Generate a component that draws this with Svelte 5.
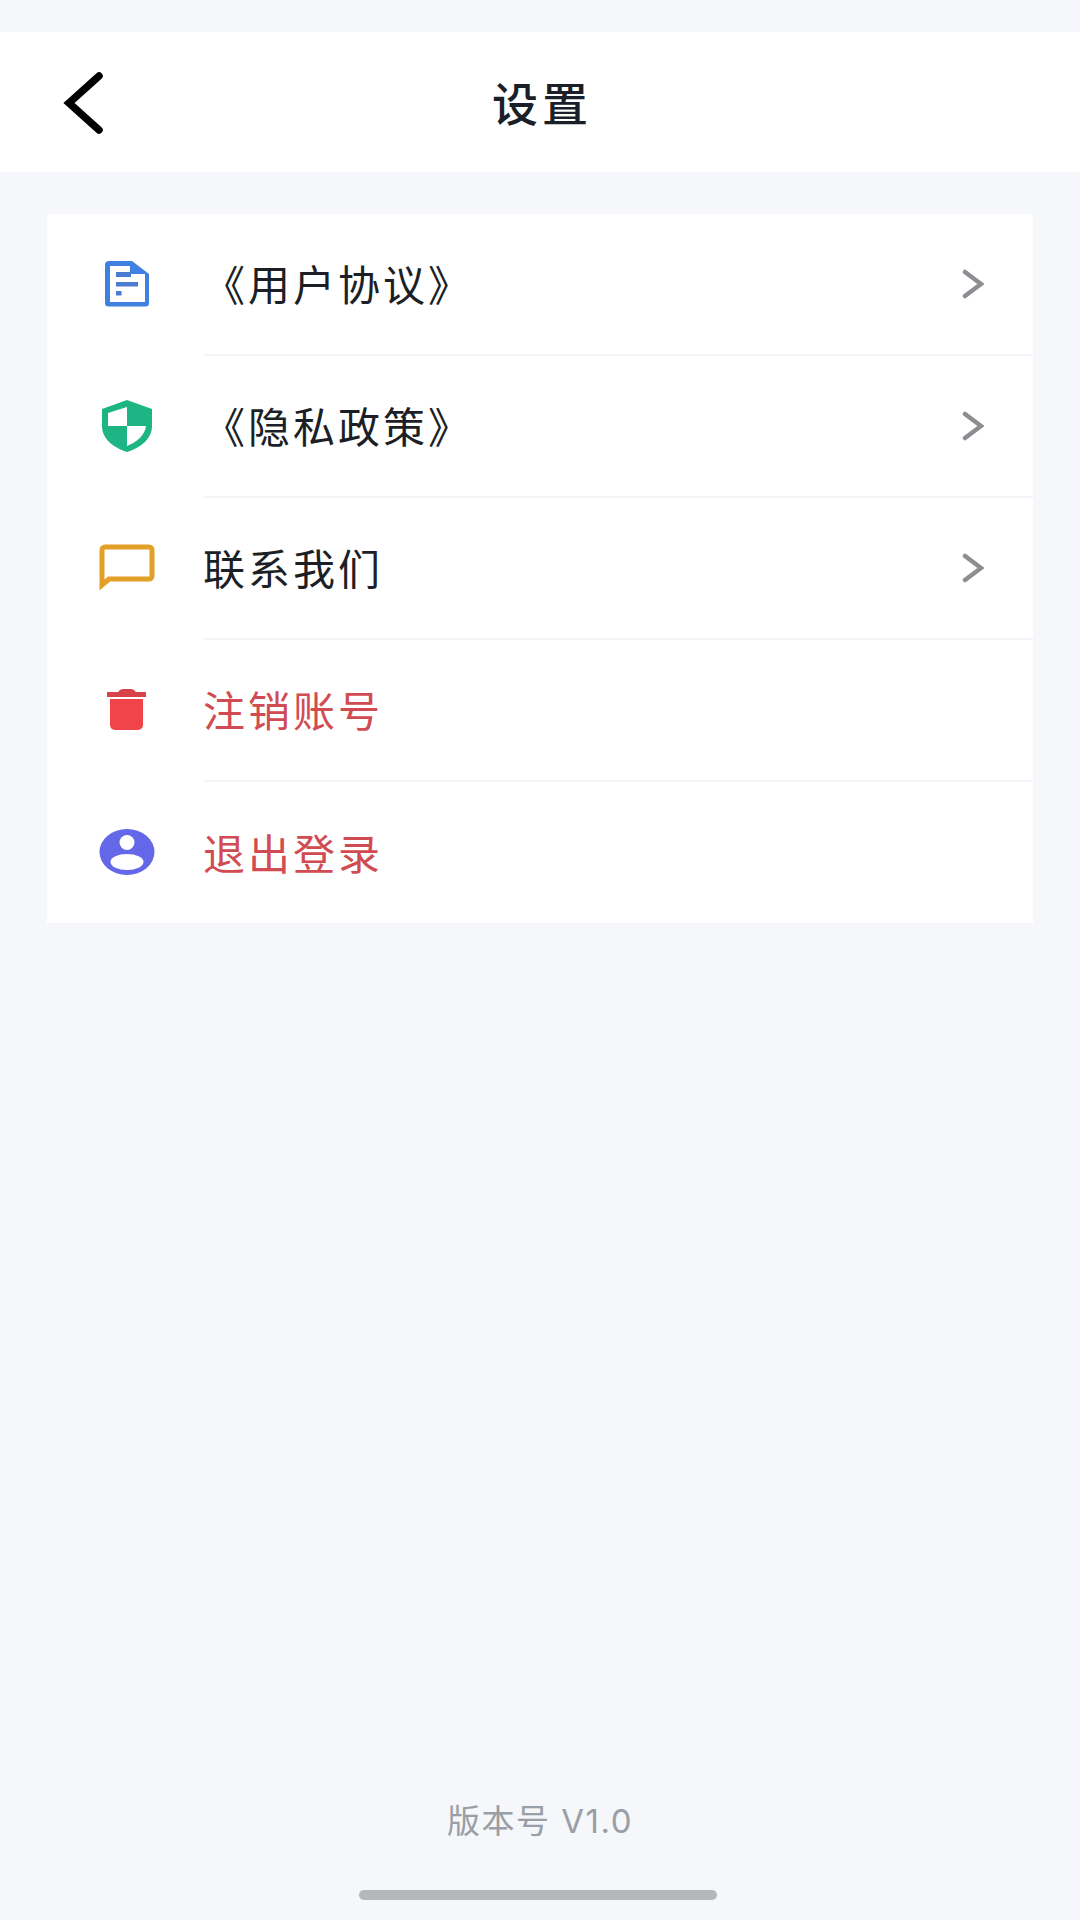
<script>
  const rows = [
    { icon: 'doc', label: '《用户协议》', arrow: true },
    { icon: 'shield', label: '《隐私政策》', arrow: true },
    { icon: 'chat', label: '联系我们', arrow: true },
    { icon: 'trash', label: '注销账号', danger: true },
    { icon: 'user', label: '退出登录', danger: true }
  ];
</script>

<div class="page">
  <header class="bar">
    <svg class="back" width="44" height="64" viewBox="0 0 44 64" fill="none">
      <path d="M38 6 L8 33 L38 60" stroke="#000" stroke-width="7.5" stroke-linecap="round" stroke-linejoin="miter" />
    </svg>
    <h1>设置</h1>
  </header>

  <section class="card">
    {#each rows as row}
      <div class="row">
        <span class="icon">
          {#if row.icon === 'doc'}
            <svg width="44" height="46" viewBox="0 0 44 46">
              <path d="M4 0 H27 L44 13 V42 a3.5 3.5 0 0 1 -3.5 3.5 H3.5 a3.5 3.5 0 0 1 -3.5 -3.5 V4 a4 4 0 0 1 4 -4 Z" fill="#4080e0" />
              <path d="M5 5 H25 V13 H40 V41 H5 Z" fill="#fff" />
              <rect x="11" y="11" width="15" height="5" fill="#4a7cd2" />
              <rect x="11" y="21" width="22" height="4.5" fill="#4a7cd2" />
              <rect x="11" y="30" width="5.5" height="4.5" fill="#4a7cd2" />
            </svg>
          {:else if row.icon === 'shield'}
            <svg width="50" height="52" viewBox="0 0 50 52">
              <path d="M25 0 L50 9 V26 C50 39 38 48 25 52 C12 48 0 39 0 26 V9 Z" fill="#1eb584" />
              <path d="M25 7 V26 H6 V13 Z" fill="#fff" />
              <path d="M25 26 H44 C43 35 35 42 25 46 Z" fill="#fff" />
            </svg>
          {:else if row.icon === 'chat'}
            <svg width="56" height="48" viewBox="0 0 56 48" fill="none">
              <path d="M3 41 V6 a3 3 0 0 1 3 -3 H50 a3 3 0 0 1 3 3 V32 a3 3 0 0 1 -3 3 H10 Z" stroke="#e3a029" stroke-width="5" />
            </svg>
          {:else if row.icon === 'trash'}
            <svg width="40" height="42" viewBox="0 0 40 42">
              <path d="M0 3 H11 Q13 0 16 0 H24 Q27 0 29 3 H39 V8 H0 Z" fill="#d8434a" />
              <path d="M3 10 H36 V36 a5 5 0 0 1 -5 5 H8 a5 5 0 0 1 -5 -5 Z" fill="#f0434a" />
            </svg>
          {:else}
            <svg width="56" height="46" viewBox="0 0 56 46">
              <ellipse cx="28" cy="23" rx="27.5" ry="23" fill="#6467e8" />
              <circle cx="28" cy="13.5" r="7.5" fill="#fff" />
              <ellipse cx="28" cy="33" rx="16.5" ry="8" fill="#fff" />
            </svg>
          {/if}
        </span>
        <span class="main">
          <span class="label" class:danger={row.danger}>{row.label}</span>
          {#if row.arrow}
            <svg class="chev" width="22" height="30" viewBox="0 0 22 30" fill="none">
              <path d="M3 3 L19 15 L3 27" stroke="#8c8e92" stroke-width="4.5" stroke-linecap="round" />
            </svg>
          {/if}
        </span>
      </div>
    {/each}
  </section>

  <footer class="foot">
    <div class="version">版本号 V1.0</div>
    <div class="home"></div>
  </footer>
</div>

<style>
  :global(body) {
    margin: 0;
    background: #f5f7fa;
  }
  .page {
    height: 1920px;
    display: flex;
    flex-direction: column;
    background: #f5f7fa;
    font-family: "Noto Sans CJK SC", "Noto Sans", sans-serif;
    padding-top: 32px;
    box-sizing: border-box;
  }
  .bar {
    height: 140px;
    background: #fff;
    display: flex;
    align-items: center;
    justify-content: center;
    position: relative;
  }
  .back {
    position: absolute;
    left: 61px;
    top: 38px;
  }
  h1 {
    margin: 0 0 3px 4px;
    font-size: 46px;
    font-weight: 500;
    letter-spacing: 4px;
    color: #1b1f2a;
    line-height: 1;
  }
  .card {
    margin: 42px 47px 0;
    background: #fff;
    display: flex;
    flex-direction: column;
  }
  .row {
    height: 142px;
    display: flex;
  }
  .row:last-child {
    height: 141px;
  }
  .icon {
    width: 157px;
    flex: none;
    display: flex;
    align-items: center;
    justify-content: center;
    padding-left: 3px;
    padding-bottom: 2px;
    box-sizing: border-box;
  }
  .main {
    flex: 1;
    display: flex;
    align-items: center;
    justify-content: space-between;
    padding-right: 49px;
    border-bottom: 2px solid #f3f4f7;
    box-sizing: border-box;
  }
  .row:last-child .main {
    border-bottom: none;
  }
  .label {
    font-size: 42px;
    letter-spacing: 3px;
    margin-left: -1px;
    margin-bottom: 2px;
    color: #1c1f26;
    line-height: 1;
  }
  .danger {
    color: #d14c52;
  }
  .foot {
    margin-top: auto;
    display: flex;
    flex-direction: column;
    align-items: center;
  }
  .version {
    font-size: 33px;
    letter-spacing: 1.5px;
    color: #9a9ea6;
    line-height: 1;
    margin-bottom: 52px;
    font-family: Inter, "Noto Sans CJK SC", sans-serif;
  }
  .home {
    width: 358px;
    height: 10px;
    border-radius: 5px;
    background: #b6b7bb;
    margin-bottom: 20px;
    margin-right: 4px;
  }
</style>
